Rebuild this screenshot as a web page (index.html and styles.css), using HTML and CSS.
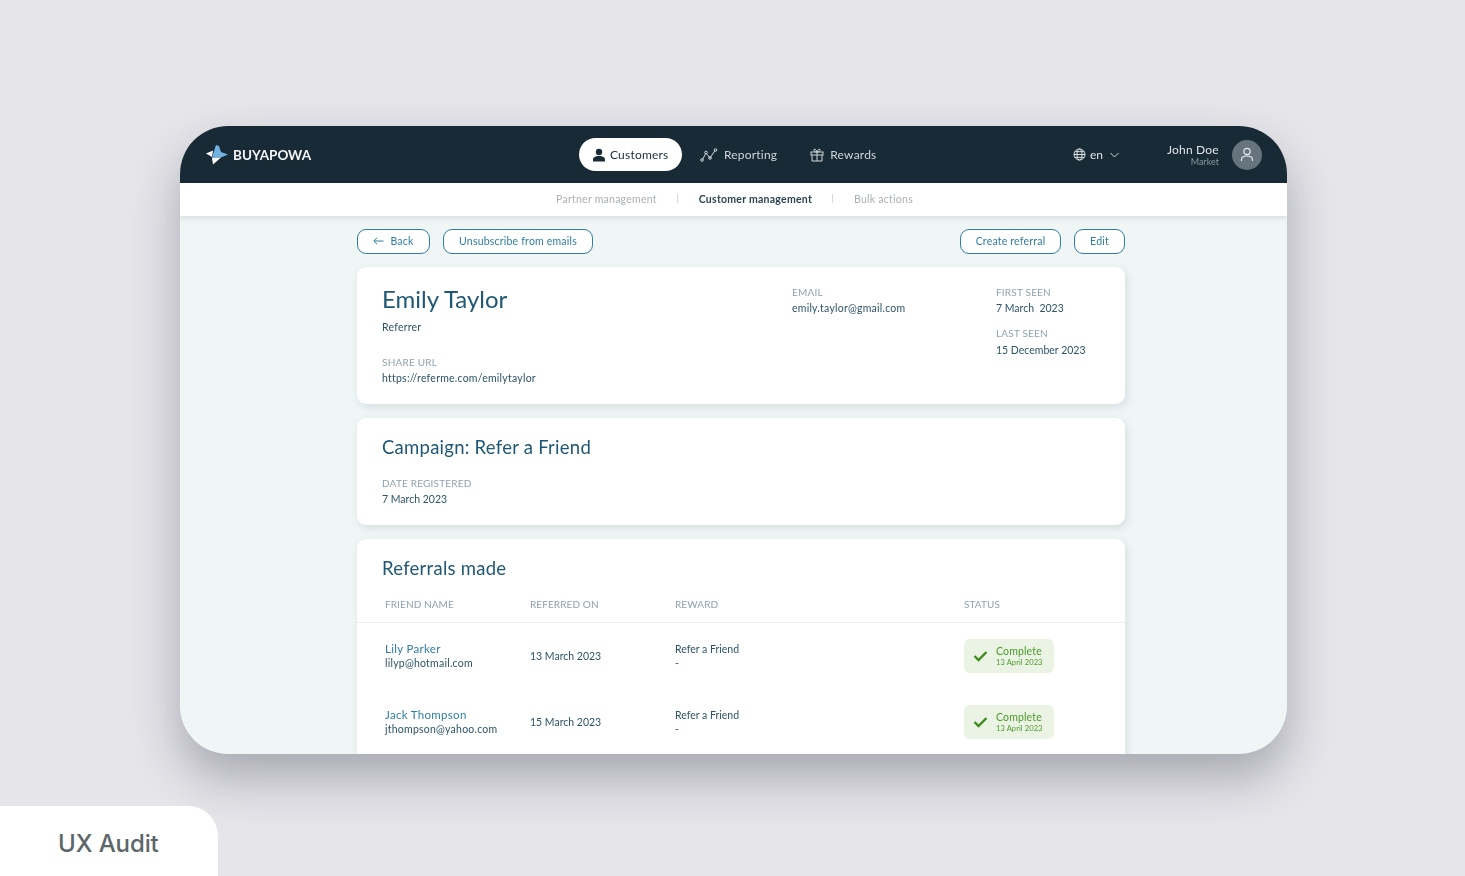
FILE: index.html
```html
<!DOCTYPE html>
<html lang="en">
<head>
  <meta charset="UTF-8">
  <meta name="viewport" content="width=device-width, initial-scale=1.0">
  <title>UX Audit</title>
  <link rel="stylesheet" href="styles.css">
</head>
<body>

  <div class="app">
    <!-- top bar -->
    <header class="topbar">
      <div class="brand">
        <svg class="brand-mark" width="22" height="20" viewBox="0 0 22 20">
          <polygon points="10,0 13,1 15,7 22,9.500 15,12.500 6,13 8,6" fill="#6fb2e0"/>
          <polygon points="0,8.500 7,5.500 6,12 " fill="#ffffff"/>
          <polygon points="6,13 15,12.500 7,19.500" fill="#ffffff"/>
        </svg>
        <span>BUYAPOWA</span>
      </div>

      <nav class="mainnav">
        <a class="mainnav-item active">
          <svg width="14" height="14" viewBox="0 0 14 14"><circle cx="7" cy="4" r="3.200" fill="#1a2b36"/><path d="M1 13.500v-1.800c0-2.400 2.400-3.700 6-3.700s6 1.300 6 3.700v1.800z" fill="#1a2b36"/></svg>
          Customers
        </a>
        <a class="mainnav-item">
          <svg width="18" height="14" viewBox="0 0 18 14" fill="none" stroke="#cfd6da" stroke-width="1"><path d="M2.500 11.500 6 5l4 5 5-7.500"/><circle cx="2" cy="12" r="1.300"/><circle cx="6" cy="4.500" r="1.300"/><circle cx="10" cy="10" r="1.300"/><circle cx="15.500" cy="2" r="1.300"/></svg>
          Reporting
        </a>
        <a class="mainnav-item rewards">
          <svg width="14" height="14" viewBox="0 0 14 14" fill="none" stroke="#cfd6da" stroke-width="1"><rect x="1" y="4" width="12" height="3"/><path d="M2 7v6h10V7M7 4v9M7 4C5 4 3.500 3 4 1.500 5 .5 6.500 2 7 4c.5-2 2-3.500 3-2.500C10.500 3 9 4 7 4z"/></svg>
          Rewards
        </a>
      </nav>

      <div class="lang">
        <svg width="13" height="13" viewBox="0 0 13 13" fill="none" stroke="#dfe4e7" stroke-width="1"><circle cx="6.500" cy="6.500" r="5.500"/><ellipse cx="6.500" cy="6.500" rx="2.500" ry="5.500"/><path d="M1 6.500h11M1.800 3.700h9.400M1.800 9.300h9.400"/></svg>
        <span>en</span>
        <svg class="chev" width="9" height="6" viewBox="0 0 9 6" fill="none" stroke="#cfd6da" stroke-width="1"><path d="M.5 1l4 4 4-4"/></svg>
      </div>

      <div class="user">
        <div class="user-text">
          <div class="user-name">John Doe</div>
          <div class="user-role">Market</div>
        </div>
        <div class="avatar">
          <svg width="14" height="15" viewBox="0 0 14 15" fill="none" stroke="#e4e8ea" stroke-width="1.200"><circle cx="7" cy="4.500" r="3.200"/><path d="M1.500 14v-1.500c0-2 2-3.500 5.500-3.500s5.500 1.500 5.500 3.500V14"/></svg>
        </div>
      </div>
    </header>

    <!-- sub navigation -->
    <div class="subnav">
      <a class="subnav-item">Partner management</a>
      <i class="subnav-sep"></i>
      <a class="subnav-item current">Customer management</a>
      <i class="subnav-sep"></i>
      <a class="subnav-item">Bulk actions</a>
    </div>

    <main class="content">
      <div class="toolbar">
        <a class="btn btn-back">
          <svg width="11" height="8" viewBox="0 0 11 8" fill="none" stroke="#2f7ea3" stroke-width="1"><path d="M10.500 4H1M4 .8 .8 4 4 7.200"/></svg>
          Back
        </a>
        <a class="btn btn-unsub">Unsubscribe from emails</a>
        <span class="toolbar-gap"></span>
        <a class="btn btn-create">Create referral</a>
        <a class="btn btn-edit">Edit</a>
      </div>

      <section class="card card-profile">
        <div class="profile-main">
          <h1>Emily Taylor</h1>
          <div class="value role">Referrer</div>
          <div class="label share-label">SHARE URL</div>
          <div class="value">https://referme.com/emilytaylor</div>
        </div>
        <div class="profile-email">
          <div class="label">EMAIL</div>
          <div class="value">emily.taylor@gmail.com</div>
        </div>
        <div class="profile-dates">
          <div class="label">FIRST SEEN</div>
          <div class="value date">7 March&nbsp; 2023</div>
          <div class="label last-label">LAST SEEN</div>
          <div class="value date">15 December 2023</div>
        </div>
      </section>

      <section class="card card-campaign">
        <h2>Campaign: Refer a Friend</h2>
        <div class="label">DATE REGISTERED</div>
        <div class="value date">7 March 2023</div>
      </section>

      <section class="card card-referrals">
        <h2>Referrals made</h2>
        <div class="table-row table-head">
          <div class="label">FRIEND NAME</div>
          <div class="label">REFERRED ON</div>
          <div class="label">REWARD</div>
          <div class="label">STATUS</div>
        </div>

        <div class="table-row">
          <div>
            <div class="friend-name">Lily Parker</div>
            <div class="value">lilyp@hotmail.com</div>
          </div>
          <div class="value date">13 March 2023</div>
          <div>
            <div class="value date">Refer a Friend</div>
            <div class="value">-</div>
          </div>
          <div class="status">
            <svg width="15" height="12" viewBox="0 0 15 12" fill="none" stroke="#3f8a1e" stroke-width="2.400"><path d="M1.500 6 5.500 10 13.500 2"/></svg>
            <div class="status-text">
              <div class="status-title">Complete</div>
              <div class="status-date">13 April 2023</div>
            </div>
          </div>
        </div>

        <div class="table-row">
          <div>
            <div class="friend-name">Jack Thompson</div>
            <div class="value">jthompson@yahoo.com</div>
          </div>
          <div class="value date">15 March 2023</div>
          <div>
            <div class="value date">Refer a Friend</div>
            <div class="value">-</div>
          </div>
          <div class="status">
            <svg width="15" height="12" viewBox="0 0 15 12" fill="none" stroke="#3f8a1e" stroke-width="2.400"><path d="M1.500 6 5.500 10 13.500 2"/></svg>
            <div class="status-text">
              <div class="status-title">Complete</div>
              <div class="status-date">13 April 2023</div>
            </div>
          </div>
        </div>
      </section>
    </main>
  </div>

  <!-- corner tag -->
  <div class="tag">UX Audit</div>

</body>
</html>
```

FILE: styles.css
```css
body {
  margin: 0;
  height: 876px;
  overflow: hidden;
  background: #e5e5ea;
  font-family: 'Lato', 'Open Sans', sans-serif;
  position: relative;
  padding-top: 126px;
  box-sizing: border-box;
}

.app {
  width: 1107px;
  height: 628px;
  margin-left: 180px;
  border-radius: 48px;
  overflow: hidden;
  background: #f0f6f6;
  box-shadow: 0 24px 48px rgba(40, 45, 55, 0.32);
  display: flex;
  flex-direction: column;
  filter: blur(0.35px);
}

/* top bar */
.topbar {
  height: 57px;
  flex: none;
  background: #182a35;
  display: flex;
  align-items: center;
  color: #dfe4e7;
  position: relative;
}

.brand {
  display: flex;
  align-items: center;
  gap: 5px;
  margin-left: 26px;
  width: 373px;
  color: #f4f6f7;
  font-size: 13.500px;
  font-weight: 700;
}

.mainnav {
  display: flex;
  align-items: center;
  gap: 18px;
  width: 494px;
}

.mainnav-item {
  display: flex;
  align-items: center;
  gap: 6px;
  font-size: 12px;
  letter-spacing: 0.2px;
  color: #cfd6da;
}

.mainnav-item.active {
  background: #ffffff;
  color: #1a2b36;
  height: 33px;
  width: 103px;
  box-sizing: border-box;
  padding-left: 13px;
  border-radius: 17px;
  gap: 4px;
}

.mainnav-item.rewards {
  margin-left: 15px;
}

.lang {
  display: flex;
  align-items: center;
  gap: 4px;
  font-size: 12px;
  width: 94px;
}

.chev {
  margin-left: 3px;
}

.user {
  display: flex;
  align-items: center;
  gap: 13px;
}

.user-text {
  text-align: right;
}

.user-name {
  font-size: 12px;
  line-height: 13px;
  letter-spacing: 0.2px;
  color: #dfe4e7;
}

.user-role {
  font-size: 9px;
  line-height: 11px;
  color: #8a979e;
}

.avatar {
  width: 30px;
  height: 30px;
  border-radius: 50%;
  background: #66757d;
  display: flex;
  align-items: center;
  justify-content: center;
}

/* sub nav */
.subnav {
  height: 33px;
  flex: none;
  background: #ffffff;
  box-shadow: 0 2px 5px rgba(60, 70, 80, 0.14);
  display: flex;
  align-items: center;
  justify-content: center;
  padding: 0 0 2px 2px;
  box-sizing: border-box;
  font-size: 10.500px;
  letter-spacing: 0.25px;
  color: #a9b1b5;
  position: relative;
}

.subnav-item.current {
  color: #2d4552;
  font-weight: 700;
}

.subnav-sep {
  width: 1px;
  height: 9px;
  background: #d5dadd;
  margin: 0 21px 0 20px;
}

/* content */
.content {
  width: 768px;
  margin-left: 177px;
}

.toolbar {
  display: flex;
  margin-top: 13px;
  margin-bottom: 13px;
  gap: 13px;
}

.toolbar-gap {
  flex: 1;
}

.btn {
  height: 25px;
  box-sizing: border-box;
  border: 1px solid #2f7ea3;
  border-radius: 9px;
  padding-bottom: 1px;
  background: #ffffff;
  color: #2f7ea3;
  font-size: 10.500px;
  letter-spacing: 0.2px;
  display: flex;
  align-items: center;
  justify-content: center;
  gap: 6px;
}

.btn-back { width: 73px; }
.btn-unsub { width: 150px; }
.btn-create { width: 101px; }
.btn-edit { width: 51px; }

.card {
  background: #ffffff;
  border-radius: 9px;
  box-shadow: 2px 3px 8px rgba(60, 80, 90, 0.14);
  margin-bottom: 14px;
}

.label {
  font-size: 10px;
  line-height: 14px;
  letter-spacing: 0.2px;
  color: #8ea2ae;
  margin-bottom: 2px;
}

.value {
  font-size: 10.500px;
  line-height: 14px;
  letter-spacing: 0.23px;
  color: #2d5468;
}

.value.date {
  letter-spacing: 0;
}

h1 {
  margin: 0;
  font-size: 24px;
  line-height: 28px;
  font-weight: 400;
  color: #1f5876;
}

h2 {
  margin: 0;
  font-size: 18.500px;
  line-height: 24px;
  letter-spacing: 0.25px;
  font-weight: 400;
  color: #1f5876;
}

.card-profile {
  height: 137px;
  box-sizing: border-box;
  display: flex;
  padding: 18px 0 0 25px;
}

.profile-main { width: 410px; }
.profile-email { width: 204px; }

.role { margin-top: 7px; }
.share-label { margin-top: 21px; }
.last-label { margin-top: 11px; margin-bottom: 3px; }

.card-campaign {
  height: 107px;
  box-sizing: border-box;
  padding: 17px 0 0 25px;
}

.card-campaign h2 {
  margin-bottom: 17px;
}

.card-referrals {
  height: 240px;
  margin-bottom: 0;
  border-radius: 9px 9px 0 0;
}

.card-referrals h2 {
  padding: 17px 0 0 25px;
}

.table-row {
  display: grid;
  grid-template-columns: 145px 145px 289px 1fr;
  align-items: center;
  height: 66px;
  padding-left: 28px;
}

.table-head {
  height: 43px;
  border-bottom: 1px solid #e8eeef;
  box-sizing: border-box;
  padding-top: 6px;
}

.table-head .label {
  margin-bottom: 0;
  letter-spacing: 0.1px;
}

.friend-name {
  font-size: 11.500px;
  line-height: 14px;
  letter-spacing: 0.3px;
  color: #2f7ea3;
}

.status {
  width: 90px;
  height: 34px;
  border-radius: 6px;
  background: #ebf3e4;
  display: flex;
  align-items: center;
  gap: 8px;
  padding-left: 9px;
  box-sizing: border-box;
}

.status-text {
  padding-top: 1px;
}

.status-title {
  font-size: 10.500px;
  line-height: 12px;
  letter-spacing: 0.15px;
  color: #4b9a2a;
}

.status-date {
  margin-top: 1px;
  font-size: 7.500px;
  line-height: 10px;
  letter-spacing: 0.1px;
  color: #4b9a2a;
}

/* corner tag */
.tag {
  position: absolute;
  left: 0;
  bottom: 0;
  width: 218px;
  height: 70px;
  box-sizing: border-box;
  padding: 24px 0 0 58px;
  background: #ffffff;
  border-radius: 0 30px 0 0;
  font-family: 'Inter', sans-serif;
  font-size: 24px;
  line-height: 28px;
  letter-spacing: -0.1px;
  font-weight: 500;
  color: #5c6569;
}
```
